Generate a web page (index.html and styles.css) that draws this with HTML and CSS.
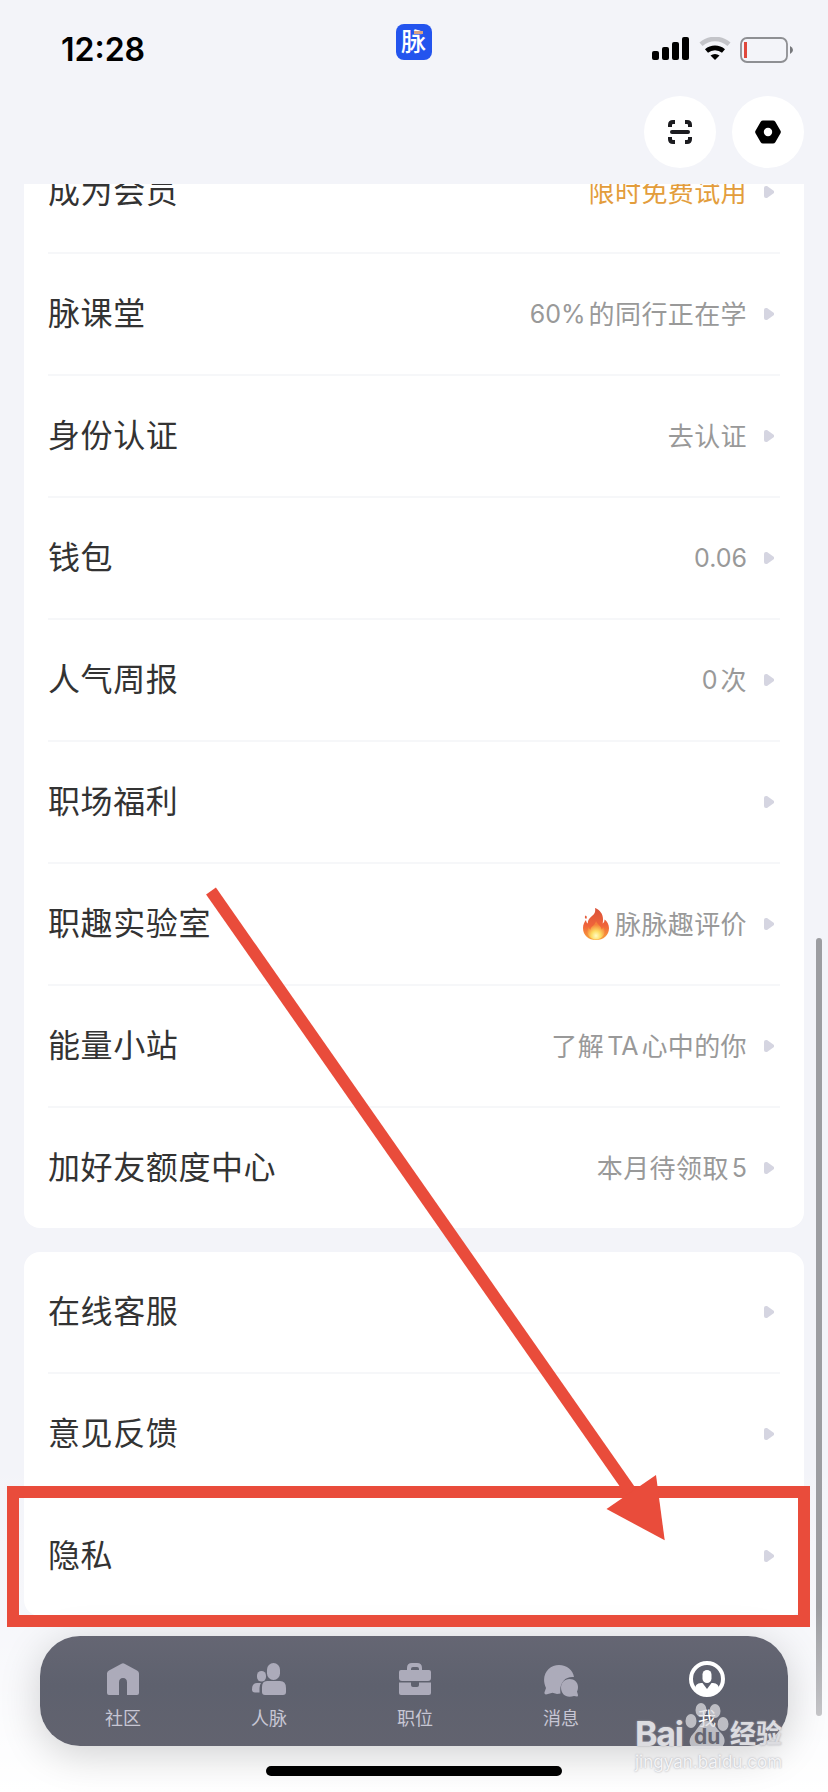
FILE: index.html
```
<!DOCTYPE html>
<html lang="zh-CN">
<head>
  <meta charset="UTF-8" />
  <meta name="viewport" content="width=device-width, initial-scale=1.0" />
  <title>我</title>
  <link rel="stylesheet" href="styles.css">
</head>
<body>
  <div class="screen">
    <header>
      <div class="status-bar">
        <span class="time">12:28</span>
        <span class="app-badge">脉<i></i></span>
        <div class="status-icons">
          <svg width="38" height="24" viewBox="0 0 38 24">
            <rect x="0" y="14" width="7" height="9" rx="2" />
            <rect x="10" y="10" width="7" height="13" rx="2" />
            <rect x="20" y="5" width="7" height="18" rx="2" />
            <rect x="30" y="0" width="7" height="23" rx="2" />
          </svg>
          <svg width="32" height="24" viewBox="0 0 32 24">
            <path d="M2 7.3a21 21 0 0 1 28 0" fill="none" stroke="#c3c4c9" stroke-width="4.6" />
            <path d="M7.5 14a13 13 0 0 1 17 0" fill="none" stroke="#000" stroke-width="4.6" />
            <path d="M11.5 18.6a7 7 0 0 1 9 0L16 23z" />
          </svg>
          <svg width="54" height="26" viewBox="0 0 54 26">
            <rect x="1" y="1" width="46" height="24" rx="6" fill="none" stroke="#8e8f93" stroke-width="1.8" />
            <rect x="4" y="5" width="3" height="16" fill="#e0483c" />
            <path d="M50 9q3 1.500 3 4t-3 4z" fill="#77787c" />
          </svg>
        </div>
      </div>
      <div class="toolbar">
        <button class="round-btn">
          <svg width="24" height="24" viewBox="0 0 24 24" fill="none" stroke="#1c1c20" stroke-width="4">
            <path d="M2 7V5q0-3 3-3h2M17 2h2q3 0 3 3v2M22 17v2q0 3-3 3h-2M7 22H5q-3 0-3-3v-2" />
            <path d="M4 12h16" stroke-linecap="round" />
          </svg>
        </button>
        <button class="round-btn">
          <svg width="26" height="24" viewBox="0 0 26 24">
            <path fill-rule="evenodd" d="M8 .5h10q1.500 0 2.300 1.300l5.200 9q.7 1.200 0 2.400l-5.200 9q-.8 1.300-2.300 1.300H8q-1.500 0-2.300-1.300l-5.200-9q-.7-1.200 0-2.400l5.200-9Q6.500.5 8 .5zM13 7.800a4.200 4.200 0 1 0 0 8.400 4.200 4.200 0 0 0 0-8.400z" />
          </svg>
        </button>
      </div>
    </header>

    <div class="bottom-fade"></div>

    <main>
      <section class="card card-first">
        <div class="row"><span class="label">成为会员</span><span class="value gold">限时免费试用</span><i class="arrow"></i></div>
        <div class="row"><span class="label">脉课堂</span><span class="value"><b class="start">60%</b>的同行正在学</span><i class="arrow"></i></div>
        <div class="row"><span class="label">身份认证</span><span class="value">去认证</span><i class="arrow"></i></div>
        <div class="row"><span class="label">钱包</span><span class="value"><b>0.06</b></span><i class="arrow"></i></div>
        <div class="row"><span class="label">人气周报</span><span class="value"><b class="start">0</b>次</span><i class="arrow"></i></div>
        <div class="row"><span class="label">职场福利</span><span class="value"></span><i class="arrow"></i></div>
        <div class="row">
          <span class="label">职趣实验室</span>
          <span class="value">
            <svg class="fire" width="28" height="34" viewBox="0 0 28 34">
              <defs>
                <linearGradient id="flame" x1="0" y1="0" x2="0" y2="1">
                  <stop offset="0" stop-color="#d9523a" />
                  <stop offset=".55" stop-color="#f0643a" />
                  <stop offset="1" stop-color="#f9a43c" />
                </linearGradient>
                <radialGradient id="core" cx=".5" cy=".8" r=".6">
                  <stop offset="0" stop-color="#fffbc4" />
                  <stop offset=".45" stop-color="#fddc62" />
                  <stop offset="1" stop-color="#f5813a" />
                </radialGradient>
              </defs>
              <path fill="url(#flame)" d="M13 1c5 2 8 6 8 11 0 2 0 3-.4 4.500 1.400-.8 1.900-2 2-4C25 14 27 17.500 27 21c0 7.500-5.500 12-13 12S1 28.500 1 21c0-3.500 1.500-6 3-8 .3 2 .8 3 1.700 3.600C6 11 10 9.500 12 7 13.200 5.400 13.500 3.500 13 1zM3.500 8.500c1.500.5 1.800 2.200.6 3.500-1.600-.8-1.600-2.400-.6-3.500z" />
              <path fill="url(#core)" d="M14 14c.5 3 5.500 5 5.500 8.500 1-.5 1.400-1.500 1.500-2.500 1.800 2 2 4 1.500 6-1 4-4.500 6.500-8.500 6.500S6.500 30 5.500 26c-.5-2 0-4 1.200-6 .3 1.500.8 2.200 1.800 2.700C8.500 19.500 13.500 18 14 14z" />
            </svg>脉脉趣评价</span>
          <i class="arrow"></i>
        </div>
        <div class="row"><span class="label">能量小站</span><span class="value">了解<b class="mid">TA</b>心中的你</span><i class="arrow"></i></div>
        <div class="row"><span class="label">加好友额度中心</span><span class="value">本月待领取<b class="end">5</b></span><i class="arrow"></i></div>
      </section>

      <section class="card">
        <div class="row"><span class="label">在线客服</span><span class="value"></span><i class="arrow"></i></div>
        <div class="row"><span class="label">意见反馈</span><span class="value"></span><i class="arrow"></i></div>
        <div class="row"><span class="label">隐私</span><span class="value"></span><i class="arrow"></i></div>
      </section>
    </main>

    <div class="scrollbar"></div>

    <nav class="tabbar">
      <a class="tab">
        <svg width="36" height="36" viewBox="0 0 36 36"><path d="M16.500 2.700q1.500-.9 3 0L32 9.500q2 1.200 2 3V32q0 2-2 2h-6V21.500q0-4.500-4-4.500t-4 4.500V34H4q-2 0-2-2V12.500q0-1.800 2-3z" class="hidden" /><path d="M16.500 2.700q1.500-.9 3 0L32 9.500q2 1.200 2 3V32q0 2-2 2H22V21.500q0-4.500-4-4.500t-4 4.500V34H4q-2 0-2-2V12.500q0-1.800 2-3z" /></svg>
        <span>社区</span>
      </a>
      <a class="tab">
        <svg width="36" height="36" viewBox="0 0 36 36">
          <rect x="16" y="2" width="13" height="17" rx="6.500" />
          <rect x="6" y="10" width="9" height="10.500" rx="4.500" />
          <path d="M16 20h13q6 0 6 7v4q0 3-3 3H14q-3 0-3-3v-5q0-6 5-6zM6 22h4q-1.500 2-1.500 5v4.500H4q-3 0-3-3Q1 22 6 22z" />
        </svg>
        <span>人脉</span>
      </a>
      <a class="tab">
        <svg width="36" height="36" viewBox="0 0 36 36">
          <path fill-rule="evenodd" d="M10 9V7q0-5 5-5h5q5 0 5 5v2h7q2 0 2 2v6q0 3-3 3H5q-3 0-3-3v-6q0-2 2-2zM14 9h8V8q0-2-2-2h-4q-2 0-2 2z" />
          <path d="M2 21.500h12V24q0 2 2 2h4q2 0 2-2v-2.500h12V32q0 2-2 2H4q-2 0-2-2z" />
        </svg>
        <span>职位</span>
      </a>
      <a class="tab">
        <svg width="36" height="36" viewBox="0 0 36 36">
          <path d="M16 4C24 4 30 9 31 16c-9-1-15 6-13.500 16.500L14 33l-4.500-1.300L4 33.300q-3 .7-2.500-2L3 27C-3 14 6 4 16 4z" />
          <path d="M26.500 18c5 0 8.500 3.500 8.500 8 0 2-.5 3.500-1 4.500l1 3.500q.3 1.500-1 1.500l-3-.6q-2 .8-4.500.8c-5 0-8.500-4-8.500-9s3.500-8.700 8.500-8.700z" />
        </svg>
        <span>消息</span>
      </a>
      <a class="tab active">
        <svg width="36" height="36" viewBox="0 0 36 36">
          <circle cx="18" cy="18" r="16" fill="none" stroke="#fff" stroke-width="4" />
          <rect x="13.500" y="9" width="9" height="13" rx="4.500" />
          <path d="M6 28q0-5.500 6-6h1.500l4.500 6 4.500-6H24q6 .5 6 6-4 6-12 6T6 28z" />
        </svg>
        <span>我</span>
      </a>
    </nav>
    <div class="home-indicator"></div>

    <div class="highlight-box"></div>
    <svg class="pointer" width="828" height="1792" viewBox="0 0 828 1792">
      <path d="M211 891L631 1492" stroke="#e94c3b" stroke-width="12" />
      <path d="M664.700 1540.300L606.500 1509L656 1475z" fill="#e94c3b" />
    </svg>

    <div class="watermark">
      <div class="brand">
        <span class="bai">Bai</span>
        <span class="paw">
          <svg width="44" height="48" viewBox="0 0 44 48">
            <ellipse cx="6" cy="19" rx="5.500" ry="7" />
            <ellipse cx="16" cy="8" rx="5.500" ry="7" />
            <ellipse cx="30" cy="9" rx="5.500" ry="7" />
            <ellipse cx="38" cy="22" rx="5.500" ry="7" />
            <path d="M22 19c7 0 9 8 14 12 7 7 3 16-5 16H13C4 47 2 38 8 32c5-5 7-13 14-13z" />
          </svg>
          <em>du</em>
        </span>
        <span class="cn">经验</span>
      </div>
      <div class="site">jingyan.baidu.com</div>
    </div>
  </div>
</body>
</html>
```
FILE: styles.css
```
* {
  box-sizing: border-box;
}

body {
  margin: 0;
  background-color: #f3f4f9;
  font-family: Inter, 'Noto Sans CJK SC', sans-serif;
  color: #333;
}

.screen {
  position: relative;
  width: 828px;
  height: 1792px;
  overflow: hidden;
}

header {
  position: relative;
  z-index: 2;
  height: 184px;
  background-color: #f3f4f9;
}

.status-bar {
  display: grid;
  grid-template-columns: 1fr 36px 1fr;
  height: 96px;
  padding: 0 34px 0 61px;
}

.time {
  padding-top: 31px;
  font-size: 32px;
  line-height: 38px;
  font-weight: 600;
  color: #000;
}

.app-badge {
  position: relative;
  width: 36px;
  height: 36px;
  margin: 24px 0 0 -14px;
  border-radius: 8px;
  background-color: #2354ee;
  color: #fff;
  font-size: 25px;
  line-height: 36px;
  font-weight: 500;
  text-align: center;
}

.app-badge i {
  position: absolute;
  top: 7px;
  left: 18px;
  width: 9px;
  height: 3px;
  background-color: #d9a184;
}

.status-icons {
  display: flex;
  justify-content: flex-end;
  gap: 9px;
  padding-top: 37px;
}

.toolbar {
  display: flex;
  justify-content: flex-end;
  gap: 16px;
  padding-right: 24px;
}

.round-btn {
  display: flex;
  align-items: center;
  justify-content: center;
  width: 72px;
  height: 72px;
  padding: 0;
  border: none;
  border-radius: 50%;
  background-color: #fff;
}

main {
  position: relative;
  display: flex;
  flex-direction: column;
  gap: 24px;
  padding: 0 24px;
}

.card {
  padding: 0 24px;
  border-radius: 16px;
  background-color: #fff;
}

/* list is scrolled, first row slides under the header */
.card-first {
  margin-top: -52px;
}

.row {
  display: flex;
  align-items: center;
  height: 122px;
  padding-right: 6px;
  border-bottom: 2px solid #f6f7f9;
}

.row:last-child {
  height: 120px;
  border-bottom: none;
}

.label {
  padding-bottom: 6px;
  font-size: 32px;
  letter-spacing: 0.6px;
  color: #333;
}

.value {
  display: flex;
  align-items: center;
  margin-left: auto;
  margin-right: 17px;
  padding-bottom: 4px;
  font-size: 26px;
  letter-spacing: 0.4px;
  color: #999;
}

.value b {
  padding-top: 3px;
  font-size: 25px;
  font-weight: 400;
  letter-spacing: 0;
}

.value .start {
  padding-right: 3px;
}

.value .mid {
  padding-left: 3px;
  padding-right: 3px;
}

.value .end {
  padding-left: 3px;
}

.gold {
  color: #e39d3c;
}

.fire {
  margin-top: 3px;
  margin-right: 5px;
}

.arrow {
  width: 10px;
  height: 12px;
  border-radius: 2px;
  background-color: #d5d5e1;
  clip-path: polygon(0 0, 30% 0, 100% 42%, 100% 58%, 30% 100%, 0 100%);
}

.scrollbar {
  position: absolute;
  top: 938px;
  right: 6px;
  width: 6px;
  height: 778px;
  border-radius: 3px;
  background: linear-gradient(#9c9da1 86%, #c6c6c9);
}

.bottom-fade {
  position: absolute;
  left: 0;
  bottom: 0;
  width: 100%;
  height: 340px;
  background: linear-gradient(rgba(255, 255, 255, 0), rgba(255, 255, 255, 0.3) 50%, #fff);
}

.tabbar {
  position: absolute;
  left: 40px;
  bottom: 46px;
  display: flex;
  width: 748px;
  height: 110px;
  padding: 0 8px 0 10px;
  border-radius: 40px;
  background: linear-gradient(#656673, #5e616e 45%, #62636f);
  box-shadow: 0 8px 40px rgba(0, 0, 0, 0.18);
}

.tab {
  display: flex;
  flex: 1;
  flex-direction: column;
  align-items: center;
  padding-top: 25px;
  color: #c7c6d4;
  font-size: 18px;
  line-height: 26px;
}

.tab svg {
  margin-bottom: 9px;
  fill: #acabba;
}

.tab .hidden {
  display: none;
}

.active {
  color: #fff;
}

.active svg {
  fill: #fff;
}

.home-indicator {
  position: absolute;
  left: 266px;
  bottom: 16px;
  width: 296px;
  height: 10px;
  border-radius: 5px;
  background-color: #000;
}

.highlight-box {
  position: absolute;
  top: 1486px;
  left: 7px;
  width: 803px;
  height: 141px;
  border: 12px solid #e94c3b;
}

.pointer {
  position: absolute;
  top: 0;
  left: 0;
}

.watermark {
  position: absolute;
  top: 1704px;
  left: 635px;
  width: 150px;
  color: #dcdce0;
  text-shadow: 0 0 2px #a0a0a8;
}

.brand {
  display: flex;
  align-items: flex-end;
  height: 46px;
  font-size: 34px;
  line-height: 32px;
  font-weight: 700;
}

.bai {
  width: 50px;
  letter-spacing: -1.2px;
}

.paw {
  position: relative;
  width: 45px;
  height: 48px;
}

.paw svg {
  display: block;
  fill: rgba(220, 220, 224, 0.75);
}

.paw em {
  position: absolute;
  left: 9px;
  bottom: 0;
  color: #666773;
  font-size: 21px;
  line-height: 26px;
  font-style: normal;
  text-shadow: none;
}

.cn {
  font-size: 26px;
}

.site {
  font-size: 17px;
  line-height: 24px;
  color: #f4f4f6;
  white-space: nowrap;
}
```
